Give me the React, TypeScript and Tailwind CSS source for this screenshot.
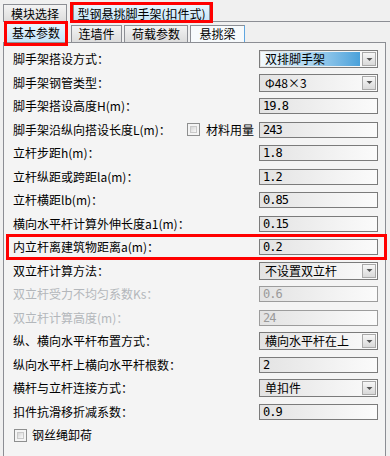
import React from "react";

const cjk = "font-['Noto_Sans_CJK_SC','Noto_Sans',sans-serif]";
const mono = "font-['DejaVu_Sans_Mono','Liberation_Mono',monospace]";

function Arrow() {
  return (
    <div className="w-[14px] h-[14px] border border-[#a9a9a9] bg-linear-to-b from-[#f7f7f7] to-[#d9d9d9] flex items-center justify-center shrink-0">
      <svg width="7" height="5" viewBox="0 0 7 5">
        <path d="M0.5 1 L6.5 1 L3.5 4 Z" fill="#555" />
      </svg>
    </div>
  );
}

function Select({ text, highlight }: { text: string; highlight?: boolean }) {
  return (
    <div className="h-[18px] w-[119px] shrink-0 border border-[#7b7b7b] bg-linear-to-r from-[#e3e3e3] to-[#fbfbfb] flex items-center px-[1px]">
      <div
        className={`flex-1 h-[14px] mr-[2px] flex items-center pl-[4px] text-[12px] text-black leading-none ${cjk} ${
          highlight ? "bg-linear-to-r from-[#f3fafe] via-[#a9d5f0] to-[#49a1da]" : ""
        }`}
      >
        {text}
      </div>
      <Arrow />
    </div>
  );
}

function Input({ text, disabled }: { text: string; disabled?: boolean }) {
  return (
    <div
      className={`h-[16px] w-[119px] shrink-0 border border-[#7b7b7b] bg-linear-to-r from-[#e3e3e3] to-[#fbfbfb] flex items-center pl-[3px] text-[12px] tracking-[-1px] leading-none ${mono} ${
        disabled ? "text-[#9a9a9a] border-[#9c9c9c]" : "text-black"
      }`}
    >
      {text}
    </div>
  );
}

function Check() {
  return (
    <div className="w-[13px] h-[13px] border border-[#8e8f8f] bg-[#f4f4f4] p-[2px] shrink-0">
      <div className="w-full h-full bg-linear-to-br from-[#d6d6d6] to-[#f9f9f9] border border-[#c9c9c9]" />
    </div>
  );
}

type Row = {
  label: string;
  kind: "select" | "input";
  value: string;
  disabled?: boolean;
  highlight?: boolean;
  red?: boolean;
  check?: boolean;
};

const rows: Row[] = [
  { label: "脚手架搭设方式：", kind: "select", value: "双排脚手架", highlight: true },
  { label: "脚手架钢管类型：", kind: "select", value: "Φ48×3" },
  { label: "脚手架搭设高度H(m)：", kind: "input", value: "19.8" },
  { label: "脚手架沿纵向搭设长度L(m)：", kind: "input", value: "243", check: true },
  { label: "立杆步距h(m)：", kind: "input", value: "1.8" },
  { label: "立杆纵距或跨距la(m)：", kind: "input", value: "1.2" },
  { label: "立杆横距lb(m)：", kind: "input", value: "0.85" },
  { label: "横向水平杆计算外伸长度a1(m)：", kind: "input", value: "0.15" },
  { label: "内立杆离建筑物距离a(m)：", kind: "input", value: "0.2", red: true },
  { label: "双立杆计算方法：", kind: "select", value: "不设置双立杆" },
  { label: "双立杆受力不均匀系数Ks：", kind: "input", value: "0.6", disabled: true },
  { label: "双立杆计算高度(m)：", kind: "input", value: "24", disabled: true },
  { label: "纵、横向水平杆布置方式：", kind: "select", value: "横向水平杆在上" },
  { label: "纵向水平杆上横向水平杆根数：", kind: "input", value: "2" },
  { label: "横杆与立杆连接方式：", kind: "select", value: "单扣件" },
  { label: "扣件抗滑移折减系数：", kind: "input", value: "0.9" },
];

export default function App() {
  return (
    <div className={`w-[390px] h-[456px] overflow-hidden bg-[#f0f0f0] ${cjk} text-[12px] text-black flex flex-col`}>
      {/* top tab row */}
      <div className="h-[22px] flex items-end pl-[3px] shrink-0">
        <div className="w-[64px] h-[18px] border border-b-0 border-[#8c8e94] bg-linear-to-b from-[#f3f3f3] to-[#dcdcdc] flex items-center justify-center leading-none">
          模块选择
        </div>
        <div className="relative ml-[6px] w-[137px] h-[18px] border border-b-0 border-[#8c8e94] bg-linear-to-b from-[#eaf6fd] to-[#c3e3f7] flex items-center justify-center leading-none">
          型钢悬挑脚手架(扣件式)
          <div className="absolute left-[-4px] right-[-4px] top-[-3px] bottom-[-1px] border-[3px] border-[#ff0000] pointer-events-none" />
        </div>
        <div className="flex-1 h-[1px] bg-[#8c8e94] ml-[1px]" />
      </div>
      {/* second tab row */}
      <div className="h-[20px] flex items-end pl-[6px] shrink-0">
        <div className="relative w-[60px] h-[19px] border border-b-0 border-[#8c8e94] bg-linear-to-b from-[#eaf6fd] to-[#c3e3f7] flex items-center justify-center leading-none">
          基本参数
          <div className="absolute left-[-3px] right-[-3px] top-[-3px] bottom-[-4px] border-[3px] border-[#ff0000] pointer-events-none" />
        </div>
        <div className="ml-[5px] w-[51px] h-[17px] border border-b-0 border-[#8c8e94] bg-linear-to-b from-[#f3f3f3] to-[#dcdcdc] flex items-center justify-center leading-none">
          连墙件
        </div>
        <div className="ml-[2px] w-[64px] h-[17px] border border-b-0 border-[#8c8e94] bg-linear-to-b from-[#f3f3f3] to-[#dcdcdc] flex items-center justify-center leading-none">
          荷载参数
        </div>
        <div className="ml-[2px] w-[55px] h-[17px] border border-b-0 border-l-[#8c8e94] border-t-[#8c8e94] border-r-[#5fa6e0] bg-[#f7fafc] flex items-center justify-center leading-none">
          悬挑梁
        </div>
      </div>
      {/* panel */}
      <div className="ml-[3px] w-[383px] flex-1 border-l border-r border-t border-[#8c8e94] bg-[#f4f4f4] pl-[9px] pr-[7px] pt-[4.5px]">
        {rows.map((r, i) => (
          <div key={i} className="relative h-[23.5px] flex items-center">
            <div className={`flex-1 leading-none whitespace-nowrap ${r.disabled ? "text-[#b3b7bb]" : "text-black"}`}>{r.label}</div>
            {r.check && (
              <div className="flex items-center mr-[5px] gap-[6px] leading-none">
                <Check />
                <span>材料用量</span>
              </div>
            )}
            {r.kind === "select" ? (
              <Select text={r.value} highlight={r.highlight} />
            ) : (
              <Input text={r.value} disabled={r.disabled} />
            )}
            {r.red && (
              <div className="absolute left-[-7px] right-[-9px] top-[-1.5px] bottom-[-1px] border-[3px] border-[#ff0000] pointer-events-none" />
            )}
          </div>
        ))}
        <div className="h-[23.5px] flex items-center pl-[1px] gap-[5px] leading-none">
          <Check />
          <span>钢丝绳卸荷</span>
        </div>
      </div>
    </div>
  );
}
